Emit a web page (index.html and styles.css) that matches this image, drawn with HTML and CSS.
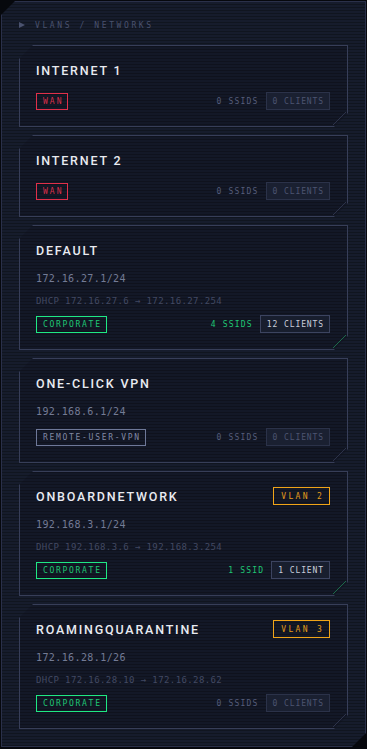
FILE: index.html
```html
<!DOCTYPE html>
<html lang="en">
<head>
    <meta charset="UTF-8">
    <meta name="viewport" content="width=device-width, initial-scale=1.0">
    <title>VLANs / Networks</title>
    <link rel="stylesheet" href="styles.css">
</head>
<body>
    <div class="panel">
        <div class="panel-head"><span class="arrow"></span>VLANS / NETWORKS</div>

        <div class="net-list">
            <div class="net">
                <div class="net-top"><span class="net-name">INTERNET 1</span></div>
                <div class="net-foot">
                    <span class="tag tag-wan">WAN</span>
                    <div class="counts">
                        <span class="ssids">0 SSIDS</span>
                        <span class="clients">0 CLIENTS</span>
                    </div>
                </div>
            </div>

            <div class="net">
                <div class="net-top"><span class="net-name">INTERNET 2</span></div>
                <div class="net-foot">
                    <span class="tag tag-wan">WAN</span>
                    <div class="counts">
                        <span class="ssids">0 SSIDS</span>
                        <span class="clients">0 CLIENTS</span>
                    </div>
                </div>
            </div>

            <div class="net active">
                <div class="net-top"><span class="net-name">DEFAULT</span></div>
                <div class="net-ip">172.16.27.1/24</div>
                <div class="net-dhcp">DHCP 172.16.27.6 → 172.16.27.254</div>
                <div class="net-foot">
                    <span class="tag tag-corp">CORPORATE</span>
                    <div class="counts">
                        <span class="ssids">4 SSIDS</span>
                        <span class="clients">12 CLIENTS</span>
                    </div>
                </div>
            </div>

            <div class="net">
                <div class="net-top"><span class="net-name">ONE-CLICK VPN</span></div>
                <div class="net-ip">192.168.6.1/24</div>
                <div class="net-foot">
                    <span class="tag tag-vpn">REMOTE-USER-VPN</span>
                    <div class="counts">
                        <span class="ssids">0 SSIDS</span>
                        <span class="clients">0 CLIENTS</span>
                    </div>
                </div>
            </div>

            <div class="net active">
                <div class="net-top">
                    <span class="net-name">ONBOARDNETWORK</span>
                    <span class="tag tag-vlan">VLAN 2</span>
                </div>
                <div class="net-ip">192.168.3.1/24</div>
                <div class="net-dhcp">DHCP 192.168.3.6 → 192.168.3.254</div>
                <div class="net-foot">
                    <span class="tag tag-corp">CORPORATE</span>
                    <div class="counts">
                        <span class="ssids">1 SSID</span>
                        <span class="clients">1 CLIENT</span>
                    </div>
                </div>
            </div>

            <div class="net">
                <div class="net-top">
                    <span class="net-name">ROAMINGQUARANTINE</span>
                    <span class="tag tag-vlan">VLAN 3</span>
                </div>
                <div class="net-ip">172.16.28.1/26</div>
                <div class="net-dhcp">DHCP 172.16.28.10 → 172.16.28.62</div>
                <div class="net-foot">
                    <span class="tag tag-corp">CORPORATE</span>
                    <div class="counts">
                        <span class="ssids">0 SSIDS</span>
                        <span class="clients">0 CLIENTS</span>
                    </div>
                </div>
            </div>
        </div>
    </div>
</body>
</html>
```

FILE: styles.css
```css
body {
    margin: 0;
    padding: 1px;
    background: #06080d;
    font-family: "DejaVu Sans Mono", monospace;
}

/* Panneau principal */
.panel {
    border: 1px solid #2a3049;
    padding: 17px;
    background: repeating-linear-gradient(to bottom, #161c2c 0 2px, #10151f 2px 3px);
    clip-path: polygon(14px 0, 100% 0, 100% calc(100% - 14px), calc(100% - 14px) 100%, 0 100%, 0 14px);
}

.panel-head {
    display: flex;
    align-items: center;
    height: 12px;
    font-size: 8px;
    letter-spacing: 2.6px;
    color: #4a526e;
    margin-bottom: 14px;
}

.arrow {
    width: 0;
    height: 0;
    border-left: 6px solid #4a526e;
    border-top: 3.5px solid transparent;
    border-bottom: 3.5px solid transparent;
    margin-right: 10px;
}

.net-list {
    display: flex;
    flex-direction: column;
    gap: 8px;
}

/* Carte reseau */
.net {
    position: relative;
    border: 1px solid #373e58;
    padding: 16px 17px 16px 16px;
    background: rgba(10, 13, 22, 0.25);
    clip-path: polygon(14px 0, 100% 0, 100% calc(100% - 14px), calc(100% - 14px) 100%, 0 100%, 0 14px);
}

.net::after {
    content: "";
    position: absolute;
    right: 0;
    bottom: 0;
    width: 14px;
    height: 14px;
    background: linear-gradient(to top left, transparent calc(50% + 0.3px), #2c3249 calc(50% + 0.3px), #2c3249 calc(50% + 1.3px), transparent calc(50% + 1.3px));
}

.net.active::after {
    background: linear-gradient(to top left, transparent calc(50% + 0.3px), #1c6a4a calc(50% + 0.3px), #1c6a4a calc(50% + 1.3px), transparent calc(50% + 1.3px));
}

.net-top {
    display: flex;
    justify-content: space-between;
    align-items: center;
    height: 16px;
    margin-bottom: 14px;
}

.net-name {
    font-family: Roboto, sans-serif;
    font-weight: 500;
    font-size: 12.5px;
    letter-spacing: 1.8px;
    color: #e9ebf1;
}

.net-ip {
    font-size: 10px;
    line-height: 14px;
    letter-spacing: 0.4px;
    color: #737b95;
    margin-bottom: 9px;
}

.net-ip + .net-foot {
    margin-top: 2px;
}

.net-dhcp {
    font-size: 9px;
    line-height: 12px;
    letter-spacing: 0.4px;
    color: #424962;
    margin-bottom: 8px;
}

.net-foot {
    display: flex;
    justify-content: space-between;
    align-items: center;
    height: 18px;
}

/* Etiquettes */
.tag {
    display: inline-flex;
    align-items: center;
    height: 17px;
    box-sizing: border-box;
    padding: 0 4px 0 6px;
    font-size: 8px;
    letter-spacing: 1.7px;
    border: 1px solid;
}

.tag-wan {
    color: #d8304a;
    border-color: #e0304a;
    letter-spacing: 2px;
}

.tag-corp {
    color: #1fc774;
    border-color: #1fe884;
}

.tag-vpn {
    color: #8088a4;
    border-color: #6e7898;
}

.tag-vlan {
    height: 18px;
    margin: -1px 0;
    padding: 0 5px 0 7px;
    color: #e29a1c;
    border-color: #f0a418;
    letter-spacing: 2.3px;
}

.counts {
    display: flex;
    align-items: center;
    gap: 7px;
}

.ssids {
    font-size: 8px;
    letter-spacing: 1.2px;
    color: #555d7a;
}

.clients {
    display: inline-flex;
    align-items: center;
    height: 18px;
    box-sizing: border-box;
    padding: 0 5px 0 6px;
    font-size: 8px;
    letter-spacing: 0.9px;
    color: #4c5470;
    background: #1a2031;
    border: 1px solid #2b3249;
}

.active .ssids {
    color: #1fc774;
}

.active .clients {
    color: #c9cdda;
    border-color: #3c4460;
    background: #181e2e;
}
```
